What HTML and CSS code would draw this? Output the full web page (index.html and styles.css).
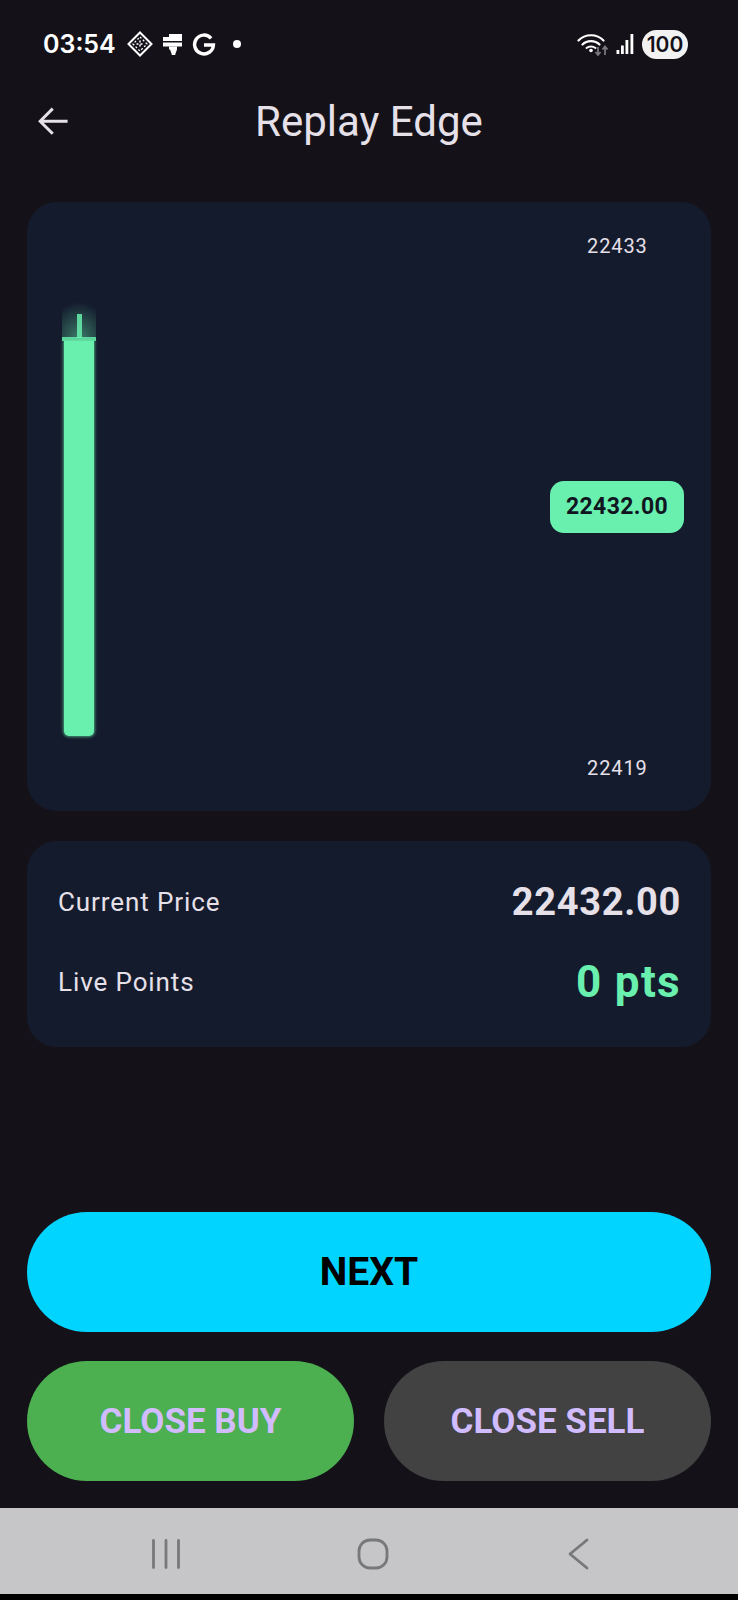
FILE: index.html
```html
<!doctype html>
<html lang="en">
  <head>
    <meta charset="UTF-8" />
    <meta name="viewport" content="width=device-width, initial-scale=1.0" />
    <title>Replay Edge</title>
    <link rel="stylesheet" href="styles.css">
  </head>
  <body>
    <div class="screen">
      <div class="status-bar">
        <div class="status-left">
          <span class="clock">03:54</span>
          <svg class="note-icon" width="26" height="26" viewBox="0 0 26 26" fill="none">
            <path d="M13 1.500 24.500 13 13 24.500 1.500 13Z" stroke="#fff" stroke-width="2" />
            <path d="M13 6 20 13 13 20 6 13Z" stroke="#fff" stroke-width="1.300" stroke-dasharray="2 2" />
            <path d="M9.500 13h7M13 9.500v7" stroke="#fff" stroke-width="1.500" stroke-dasharray="2 2" />
          </svg>
          <svg class="note-icon" width="19" height="22" viewBox="0 0 19 22" fill="#fff">
            <path d="M0 4h6V1h13v7H0Z" />
            <path d="M0 9.500h19v4H0Z" />
            <path d="M6 13.500h8v3l-1.500 4a2 2 0 0 1-4 0L7 16.500H6Z" />
          </svg>
          <svg class="g-icon" width="24" height="23" viewBox="0 0 22 22" fill="none" stroke="#fff" stroke-width="3.300">
            <path d="M17.800 5.100A9 9 0 1 0 20 11.500H11" />
          </svg>
          <span class="dot"></span>
        </div>
        <div class="status-right">
          <svg class="wifi" width="32" height="24" viewBox="0 0 32 24" fill="none">
            <path d="M1.500 8.500C8 1.500 20 1.500 26.500 8.500" stroke="#fff" stroke-width="2.200" stroke-linecap="round" />
            <path d="M5.500 12.500C10 8 18 8 22.500 12.500" stroke="#fff" stroke-width="2.200" stroke-linecap="round" />
            <path d="M9.500 16C12 14 16 14 18.500 16" stroke="#fff" stroke-width="2" stroke-linecap="round" />
            <circle cx="14" cy="18.500" r="1.800" fill="#fff" />
            <path d="M21 15v8M18.500 20 21 23l2.500-3" stroke="#77777c" stroke-width="1.800" />
            <path d="M28 23v-8M25.500 17.500 28 14.500l2.500 3" stroke="#77777c" stroke-width="1.800" />
          </svg>
          <svg class="signal" width="18" height="21" viewBox="0 0 17 21" fill="#fff">
            <rect x="0" y="16" width="2.800" height="4" />
            <rect x="4.500" y="11.500" width="2.800" height="8.500" />
            <rect x="9" y="6" width="2.800" height="14" />
            <rect x="14" y="0" width="2.800" height="20" />
          </svg>
          <span class="battery">100</span>
        </div>
      </div>

      <header class="app-bar">
        <svg class="back" width="36" height="36" viewBox="0 0 36 36" fill="none">
          <path d="M34 18H4M17.500 4 3.500 18l14 14" transform="translate(1 2) scale(.9)" stroke="#e6e0e9" stroke-width="3.300" />
        </svg>
        <h1 class="title">Replay Edge</h1>
      </header>

      <main class="content">
        <section class="card chart">
          <span class="axis axis-high">22433</span>
          <span class="axis axis-low">22419</span>
          <div class="candle-glow"></div>
          <div class="candle-wick"></div>
          <div class="candle-cap"></div>
          <div class="candle-body"></div>
          <span class="price-tag">22432.00</span>
        </section>

        <section class="card stats">
          <div class="stat-row">
            <span class="stat-label">Current Price</span>
            <span class="stat-price">22432.00</span>
          </div>
          <div class="stat-row">
            <span class="stat-label">Live Points</span>
            <span class="stat-points">0 pts</span>
          </div>
        </section>

        <div class="actions">
          <button class="btn btn-next">NEXT</button>
          <div class="btn-row">
            <button class="btn btn-buy">CLOSE BUY</button>
            <button class="btn btn-sell">CLOSE SELL</button>
          </div>
        </div>
      </main>

      <nav class="nav-bar">
        <svg width="30" height="30" viewBox="0 0 30 30" stroke="#77787a" stroke-width="2.800" stroke-linecap="round">
          <path d="M2.500 1.500v27M15 1.500v27M27.500 1.500v27" />
        </svg>
        <svg class="nav-home" width="32" height="32" viewBox="0 0 32 32" fill="none" stroke="#77787a" stroke-width="2.800">
          <rect x="2" y="2" width="28" height="28" rx="11" />
        </svg>
        <svg width="24" height="32" viewBox="0 0 24 32" fill="none" stroke="#77787a" stroke-width="2.800" stroke-linecap="round" stroke-linejoin="round">
          <path d="M21 2 4 16 21 30" />
        </svg>
      </nav>
      <div class="nav-edge"></div>
    </div>
  </body>
</html>
```

FILE: styles.css
```css
* {
  box-sizing: border-box;
}

body {
  margin: 0;
  background: #141218;
  font-family: Roboto, sans-serif;
}

.screen {
  width: 738px;
  height: 1600px;
  display: flex;
  flex-direction: column;
  background: #141218;
}

.status-bar {
  height: 88px;
  flex: none;
  display: flex;
  justify-content: space-between;
  align-items: center;
  padding: 0 50px 0 43px;
  color: #fff;
}

.status-left,
.status-right {
  display: flex;
  align-items: center;
}

.clock {
  font-family: Inter, sans-serif;
  font-size: 25px;
  font-weight: 600;
  margin-right: 11px;
}

.note-icon {
  margin-right: 10px;
}

.dot {
  width: 8px;
  height: 8px;
  margin-left: 17px;
  border-radius: 50%;
  background: #fff;
}

.wifi {
  margin-right: 2px;
}

.signal {
  margin: 0 8px 0 5px;
}

.battery {
  width: 46px;
  height: 29px;
  border-radius: 15px;
  background: #f2f2f2;
  color: #141218;
  font-family: Inter, sans-serif;
  font-size: 21px;
  font-weight: 600;
  line-height: 29px;
  text-align: center;
}

.app-bar {
  height: 66px;
  flex: none;
  display: flex;
  align-items: center;
  justify-content: center;
  position: relative;
}

.back {
  position: absolute;
  left: 36px;
  top: 15px;
}

.title {
  margin: 0;
  color: #e6e0e9;
  font-size: 42px;
  font-weight: 400;
}

.content {
  flex: 1;
  display: flex;
  flex-direction: column;
  padding: 48px 27px 27px;
}

.card {
  background: #141b2d;
  border-radius: 30px;
}

.chart {
  height: 609px;
  flex: none;
  position: relative;
}

.axis {
  position: absolute;
  left: 560px;
  color: #e6e0e9;
  font-size: 20px;
  letter-spacing: 0.9px;
}

.axis-high {
  top: 32px;
}

.axis-low {
  top: 554px;
}

.candle-glow {
  position: absolute;
  left: 35px;
  top: 100px;
  width: 34px;
  height: 36px;
  background: radial-gradient(ellipse 90% 100% at 50% 100%, rgba(105, 240, 174, 0.45), rgba(105, 240, 174, 0));
}

.candle-wick {
  position: absolute;
  left: 50px;
  top: 112px;
  width: 5px;
  height: 24px;
  background: #69f0ae;
  opacity: 0.85;
}

.candle-cap {
  position: absolute;
  left: 35px;
  top: 135px;
  width: 34px;
  height: 4px;
  background: #69f0ae;
  opacity: 0.85;
}

.candle-body {
  position: absolute;
  left: 37px;
  top: 139px;
  width: 30px;
  height: 395px;
  background: #69f0ae;
  border-radius: 0 0 5px 5px;
  box-shadow: 0 0 3px 1px rgba(105, 240, 174, 0.6);
}

.price-tag {
  position: absolute;
  left: 523px;
  top: 279px;
  width: 134px;
  height: 52px;
  border-radius: 14px;
  background: #69f0ae;
  color: #10151f;
  font-size: 23px;
  font-weight: 700;
  letter-spacing: 0.4px;
  line-height: 52px;
  text-align: center;
}

.stats {
  margin-top: 30px;
  height: 206px;
  flex: none;
  padding: 21px 30px 0 31px;
}

.stat-row {
  display: flex;
  justify-content: space-between;
  align-items: center;
  height: 80px;
}

.stat-label {
  color: #e6e0e9;
  font-size: 26px;
  letter-spacing: 0.9px;
}

.stat-price {
  color: #e6e0e9;
  font-size: 38px;
  font-weight: 700;
  letter-spacing: 0.7px;
}

.stat-points {
  color: #69f0ae;
  font-size: 44px;
  font-weight: 700;
  letter-spacing: 1.300px;
}

.actions {
  margin-top: auto;
  display: flex;
  flex-direction: column;
  gap: 29px;
}

.btn {
  height: 120px;
  border: 0;
  border-radius: 60px;
  font-family: Roboto, sans-serif;
  font-size: 35px;
  font-weight: 700;
}

.btn-next {
  background: #00d4ff;
  color: #000;
  font-size: 39px;
}

.btn-row {
  display: flex;
  gap: 30px;
}

.btn-row .btn {
  flex: 1;
}

.btn-buy {
  background: #4caf50;
  color: #d0bcff;
}

.btn-sell {
  background: #424242;
  color: #d0bcff;
}

.nav-bar {
  height: 86px;
  flex: none;
  display: flex;
  align-items: center;
  background: #c6c6c8;
  justify-content: space-between;
  padding: 6px 148px 0 151px;
}

.nav-home {
  margin-right: 2px;
}

.nav-edge {
  height: 6px;
  flex: none;
  background: #000;
}
```
